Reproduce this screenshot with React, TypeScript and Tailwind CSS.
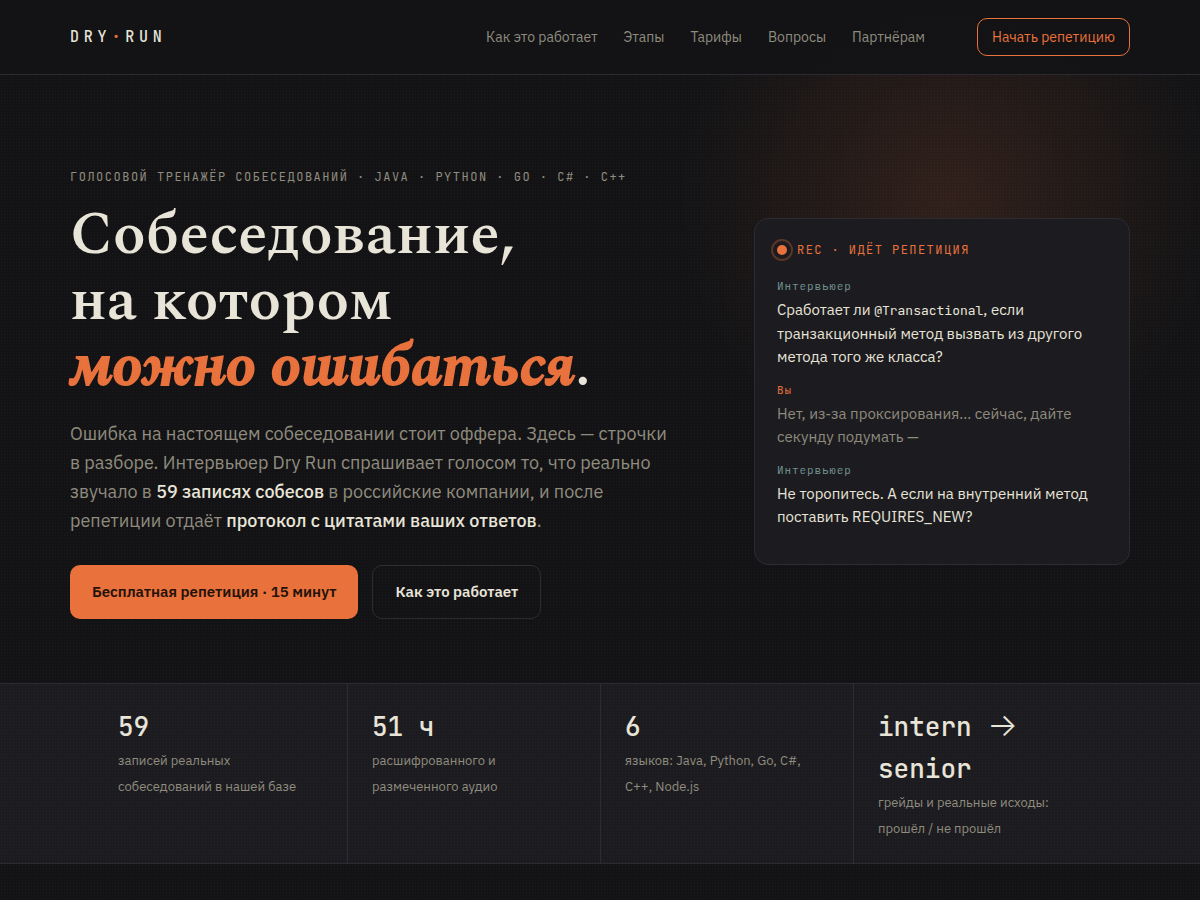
import { ReactNode } from 'react';

const navLinks = [
  { label: 'Как это работает', href: '#how' },
  { label: 'Этапы', href: '#stages' },
  { label: 'Тарифы', href: '#pricing' },
  { label: 'Вопросы', href: '#faq' },
  { label: 'Партнёрам', href: '#partners' },
];

const stats = [
  { value: '59', label: 'записей реальных собеседований в нашей базе' },
  { value: '51 ч', label: 'расшифрованного и размеченного аудио' },
  { value: '6', label: 'языков: Java, Python, Go, C#, C++, Node.js' },
  {
    value: <>intern <span className="font-[Inter,sans-serif] text-[32px] leading-none font-light">→</span> senior</>,
    label: 'грейды и реальные исходы: прошёл / не прошёл',
  },
];

interface ReplicaProps {
  who: string;
  me?: boolean;
  children: ReactNode;
}

function Replica({ who, me, children }: ReplicaProps) {
  return (
    <div className="mb-3">
      <div className={`mb-0.5 font-['JetBrains_Mono','DejaVu_Sans_Mono',monospace] text-[11px] leading-5 tracking-[0.08em] ${me ? 'text-[#e8713c]' : 'text-[#6f8f8c]'}`}>
        {who}
      </div>
      <p className={`text-[15px] leading-[23px] ${me ? 'text-[#8f8b7e]' : 'text-[#e8e4d8]'}`}>{children}</p>
    </div>
  );
}

export default function App() {
  return (
    <div className="relative min-h-screen overflow-hidden bg-[#131315] font-['IBM_Plex_Sans','Noto_Sans',sans-serif] text-[#e8e4d8]">
      {/* glow + dot grid */}
      <div className="pointer-events-none absolute inset-0 bg-[radial-gradient(ellipse_270px_270px_at_79%_200px,rgba(232,113,60,0.14),transparent)]" />
      <div className="pointer-events-none absolute inset-0 z-10 bg-[radial-gradient(rgba(255,255,255,0.035)_1px,transparent_1px)] bg-size-[3px_3px]" />

      <header className="relative z-20 border-b border-[#2b2b31] bg-[#131315]/95">
        <div className="mx-auto flex h-[74px] max-w-[1060px] items-center justify-between">
          <a href="#top" className="font-['JetBrains_Mono','DejaVu_Sans_Mono',monospace] text-[15px] font-medium tracking-[0.32em]">
            DRY<span className="font-extrabold text-[#e8713c]">·</span>RUN
          </a>
          <nav className="flex items-center gap-[26px] text-sm text-[#8f8b7e]">
            {navLinks.map(link => (
              <a key={link.href} href={link.href}>{link.label}</a>
            ))}
            <button className="ml-[26px] h-[38px] rounded-[10px] border border-[#e8713c] px-3.5 text-[#e8713c]">
              Начать репетицию
            </button>
          </nav>
        </div>
      </header>

      <main className="relative">
        <section className="mx-auto grid max-w-[1060px] grid-cols-[1fr_376px] items-center gap-14 pt-[89px] pb-16">
          <div>
            <p className="mb-3 font-['JetBrains_Mono','DejaVu_Sans_Mono',monospace] text-xs leading-[26px] tracking-[0.125em] whitespace-nowrap text-[#8f8b7e] uppercase">
              Голосовой тренажёр собеседований · Java · Python · Go · C# · C++
            </p>
            <h1 className="mb-[19px] font-[Spectral,'Liberation_Serif',serif] text-[60px] leading-[66px] font-semibold">
              Собеседование,<br />
              на котором<br />
              <em className="text-[#e8713c] [-webkit-text-stroke:2px_#e8713c]">можно ошибаться</em>.
            </h1>
            <p className="text-lg leading-[29px] text-[#8f8b7e]">
              Ошибка на настоящем собеседовании стоит оффера. Здесь — строчки<br />
              в разборе. Интервьюер Dry Run спрашивает голосом то, что реально<br />
              звучало в <b className="font-medium text-[#e8e4d8]">59 записях собесов</b> в российские компании, и после<br />
              репетиции отдаёт <b className="font-medium text-[#e8e4d8]">протокол с цитатами ваших ответов</b>.
            </p>
            <div className="mt-[30px] flex gap-3.5 text-[15px] font-semibold">
              <button className="relative z-20 h-[54px] rounded-[10px] bg-[#e8713c] px-[22px] text-[#23110a]">
                Бесплатная репетиция · 15 минут
              </button>
              <button className="h-[54px] rounded-[10px] border border-[#2b2b31] px-[22px]">
                Как это работает
              </button>
            </div>
          </div>

          <aside className="relative z-20 h-[347px] rounded-[14px] border border-[#2b2b31] bg-[#1c1c20] px-[22px] pt-[18px]">
            <div className="mb-[13px] flex items-center gap-2.5 font-['JetBrains_Mono','DejaVu_Sans_Mono',monospace] text-xs leading-[26px] tracking-[0.12em] text-[#e8713c]">
              <span className="size-2.5 rounded-full bg-[#e8713c] outline-2 outline-offset-4 outline-[#e8713c]/30" />
              REC · ИДЁТ РЕПЕТИЦИЯ
            </div>
            <Replica who="Интервьюер">
              Сработает ли <code className="font-['JetBrains_Mono','DejaVu_Sans_Mono',monospace] text-[13px]">@Transactional</code>, если<br />
              транзакционный метод вызвать из другого<br />
              метода того же класса?
            </Replica>
            <Replica who="Вы" me>
              Нет, из-за проксирования… сейчас, дайте<br />
              секунду подумать —
            </Replica>
            <Replica who="Интервьюер">
              Не торопитесь. А если на внутренний метод<br />
              поставить REQUIRES_NEW?
            </Replica>
          </aside>
        </section>

        <section className="border-y border-[#2b2b31] bg-[#1c1c20]">
          <div className="mx-auto grid max-w-[1012px] grid-cols-4">
            {stats.map(stat => (
              <div key={stat.label} className="border-l border-[#2b2b31] px-6 pt-[22px] pb-[21px] first:border-l-0">
                <div className="font-['JetBrains_Mono','DejaVu_Sans_Mono',monospace] text-[26px] leading-[42px] font-medium">{stat.value}</div>
                <div className="text-[13px] leading-[26px] text-[#8f8b7e]">{stat.label}</div>
              </div>
            ))}
          </div>
        </section>
      </main>
    </div>
  );
}
